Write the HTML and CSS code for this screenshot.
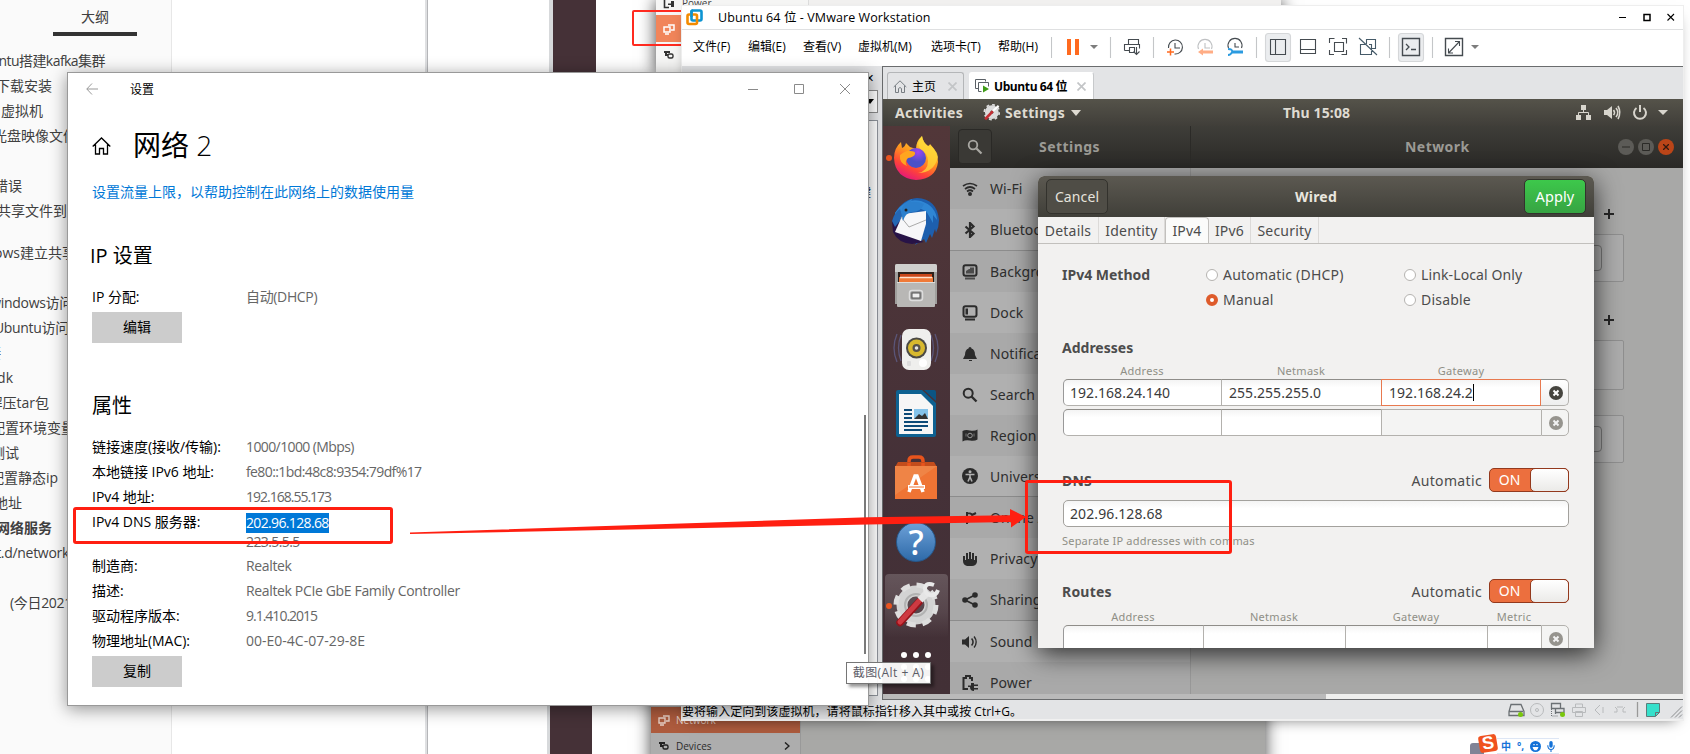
FILE: index.html
```html
<!DOCTYPE html>
<html lang="zh">
<head>
<meta charset="utf-8">
<title>设置</title>
<link rel="stylesheet" href="styles.css">
</head>
<body>
<div class="desktop">

  <aside class="outline">
    <div class="outline-tab">大纲</div>
    <ul class="outline-list">
      <li style="width:105px" class="tighter">Ubuntu搭建kafka集群</li>
      <li style="width:52px">下载安装</li>
      <li style="width:43px">虚拟机</li>
      <li style="width:77px" class="gap25">光盘映像文件</li>
      <li style="width:22px">错误</li>
      <li style="width:67px" class="gap17">共享文件到</li>
      <li style="width:76px" class="gap25">windows建立共享</li>
      <li style="width:73px" class="tight">windows访问</li>
      <li style="width:69px" class="tight">Ubuntu访问</li>
      <li style="width:1px">接</li>
      <li style="width:13px">jdk</li>
      <li style="width:49px">解压tar包</li>
      <li style="width:75px">配置环境变量</li>
      <li style="width:19px">测试</li>
      <li style="width:58px">配置静态ip</li>
      <li style="width:22px">地址</li>
      <li style="width:52px" class="current">网络服务</li>
      <li style="width:69px" class="gap25 tight">init.d/network</li>
      <li style="width:72px" class="tight">(今日2021</li>
    </ul>
  </aside>
  <div class="rule rule-a"></div>
  <div class="strip strip-top"></div>
  <div class="strip strip-bottom"></div>

  <div class="shot shot-top">
    <div class="shot-side">
      <div class="shot-row first"><svg width="12" height="12" viewBox="0 0 12 12"><path d="M6 10.500H1.500V0" stroke="#333" stroke-width="1.600" fill="none"/><path d="M5 6.500h3V4h3v6H8V8H5z" fill="#333"/></svg><span>Power</span></div>
      <div class="shot-row orange"><svg width="12" height="12" viewBox="0 0 12 12"><path d="M5 2h6v5H8M1 4h6v5H1zM2 11h4" stroke="#fff" stroke-width="1.500" fill="none"/></svg></div>
      <div class="shot-row"><svg width="12" height="12" viewBox="0 0 12 12"><path d="M1 3h6M3 3v3h2" stroke="#333" stroke-width="2" fill="none"/><rect x="5" y="5" width="5" height="4" rx="1.500" stroke="#333" stroke-width="1.400" fill="none"/></svg></div>
    </div>
    <div class="shot-main"></div>
  </div>
  <div class="shot-mark"></div>

  <div class="shot shot-bottom">
    <div class="shot-side">
      <div class="shot-row orange"><svg width="12" height="12" viewBox="0 0 12 12"><path d="M5 2h6v5H8M1 4h6v5H1zM2 11h4" stroke="#e6cfc5" stroke-width="1.400" fill="none"/></svg><span>Network</span></div>
      <div class="shot-row"><svg width="12" height="12" viewBox="0 0 12 12"><path d="M1 3h6M3 3v3h2" stroke="#222" stroke-width="2" fill="none"/><rect x="5" y="5" width="5" height="4" rx="1.500" stroke="#222" stroke-width="1.400" fill="none"/></svg><span>Devices</span><svg class="chev" width="6" height="8" viewBox="0 0 6 8"><path d="M1 .5L5 4 1 7.500" stroke="#222" stroke-width="1.500" fill="none"/></svg></div>
    </div>
    <div class="shot-main"></div>
  </div>

  <section class="vmware">
    <header class="vm-title">
      <svg width="17" height="17" viewBox="0 0 17 17" fill="none"><rect x="5.500" y="1.500" width="10" height="10" rx="1.500" stroke="#0d94d2" stroke-width="2.600"/><rect x="1.500" y="5.500" width="9.500" height="9.500" rx="1.500" stroke="#f38b00" stroke-width="2.600"/><path d="M5.500 8V3q0-1.500 1.500-1.500" stroke="#0d94d2" stroke-width="2.600"/></svg>
      <span class="vm-name">Ubuntu 64 位 - VMware Workstation</span>
      <svg class="vm-ctl" width="56" height="10" viewBox="0 0 56 10" fill="none" stroke="#000"><path d="M0 4.500h7"/><rect x="25" y="1.500" width="6" height="6" stroke-width="1.500"/><path d="M48.500 1l6.500 6.500M55 1l-6.500 6.500" stroke-width="1.100"/></svg>
    </header>
    <nav class="vm-menu">
      <span class="m1">文件(F)</span><span class="m1">编辑(E)</span><span class="m1">查看(V)</span><span class="m2">虚拟机(M)</span><span class="m3">选项卡(T)</span><span class="m4">帮助(H)</span>
      <svg class="vm-tools" width="440" height="35" viewBox="1051 30 440 35" fill="none" stroke="#454b50" stroke-width="1.100">
        <path d="M1051.500 37v21M1110.500 37v21M1153.500 37v21M1256.500 37v21M1389.500 37v21M1432.500 37v21" stroke="#c4c6c8"/>
        <path d="M1069 39v16M1077 39v16" stroke="#ff6a1f" stroke-width="4"/>
        <path d="M1090 45h8l-4 4zM1471 45h8l-4 4z" fill="#7d7d7d" stroke="none"/>
        <path d="M1128.500 44.500v-5h10v5M1124.500 50.500v-6h15v4M1124.500 50.500h5M1129.500 47.500h5v5h-5zM1136.500 47v8M1133.500 51.500l3 3 3-3"/>
        <path d="M1168.500 48a7 7 0 1 1 6 6M1175 43v5h5"/><path d="M1167 52h7M1170.500 48.500v7" stroke="#ff6a1f" stroke-width="1.500"/>
        <path d="M1198.500 49a7 7 0 1 1 13 0M1205 43v5h5" stroke="#bfc1c3"/><path d="M1213 52h-11" stroke="#ffad85" stroke-width="3"/><path d="M1203 48.500l-5 3.500 5 3.500z" fill="#ffad85" stroke="none"/>
        <path d="M1228.500 48a7 7 0 1 1 13 0M1235 43v4h4"/><path d="M1232 52h11" stroke="#2b9be0" stroke-width="3"/><path d="M1228 49q5 0 4 3t-4 3" stroke="#2b9be0" stroke-width="1.800"/>
        <rect x="1265.500" y="33.500" width="25" height="28" rx="3" fill="#ebedef" stroke="#d5d7d9"/>
        <path d="M1270.500 39.500h15v15h-15zM1275.500 39v16M1300.500 39.500h15v14h-15zM1300 49.500h15"/>
        <path d="M1334.500 42.500h9v9h-9zM1329.500 43v-4.500h5M1342 38.500h4.500v5M1346.500 50v4.500h-5M1334 54.500h-4.500V50"/>
        <path d="M1366.500 44v-4.500h9v9h-4M1369 44.500h2.500v10h-11v-10h5M1359 38l18 17" stroke="#455a68"/>
        <rect x="1398.500" y="33.500" width="25" height="28" rx="3" fill="#ebedef" stroke="#d5d7d9"/>
        <path d="M1402.500 38.500h17v17h-17z" stroke-width="1.400"/><path d="M1406 44l3 3-3 3M1411 49.500h5" stroke-width="1.300"/>
        <path d="M1445.500 38.500h17v17h-17z" stroke-width="1.400"/><path d="M1455 41.500h4.500V46M1448.500 48.500v4.500h4.500M1459 42l-10 10.500"/>
      </svg>
    </nav>
    <div class="vm-body">
      <div class="vm-lib">
        <div class="lib-head">✕</div>
        <div class="lib-search"><svg width="8" height="5" viewBox="0 0 8 5"><path d="M0 0h8L4 5z"/></svg></div>
        <div class="lib-tree">键</div>
      </div>
      <div class="vm-view">
        <div class="vm-tabs">
          <div class="vm-tab home"><svg width="14" height="13" viewBox="0 0 14 13" fill="none" stroke="#777d82"><path d="M.700 7L7 .800 13.300 7M2.500 5.500v7h3v-4q1.500-2 3 0v4h3v-7"/></svg><span>主页</span><svg width="9" height="9" viewBox="0 0 9 9"><path d="M.500.500l8 8M8.500.500l-8 8" stroke="#c3c5c7" stroke-width="1.700"/></svg></div>
          <div class="vm-tab active"><svg width="15" height="14" viewBox="0 0 15 14" fill="none" stroke="#5a6066"><path d="M3.500 9.500h-3v-9h10v2M6.500 12.500h-3v-9h10v4"/><path d="M8 6.500v7l6-3.500z" fill="#3f9c17" stroke="none"/></svg><span>Ubuntu 64 位</span><svg width="9" height="9" viewBox="0 0 9 9"><path d="M.500.500l8 8M8.500.500l-8 8" stroke="#c3c5c7" stroke-width="1.700"/></svg></div>
        </div>

        <div class="ubuntu">
          <div class="topbar">
            <span class="tb-act">Activities</span>
            <svg class="tb-gear" width="17" height="17" viewBox="0 0 48 48"><circle cx="25" cy="23" r="12" fill="none" stroke="#dcdcdc" stroke-width="15"/><circle cx="25" cy="23" r="21" fill="none" stroke="#dcdcdc" stroke-width="5" stroke-dasharray="8 8.500"/><path d="M6 43L28 20" stroke="#c32f35" stroke-width="7.500"/><path d="M28 20L44 5" stroke="#fff" stroke-width="6"/></svg>
            <span class="tb-app">Settings</span>
            <svg width="10" height="6" viewBox="0 0 10 6"><path d="M0 0h10L5 6z" fill="#dfdbd2"/></svg>
            <span class="tb-clock">Thu 15:08</span>
            <svg class="tb-tray" width="94" height="16" viewBox="0 0 94 16" fill="#d8d5cd"><path d="M5 0h5v5H5zM0 10h5v5H0zM10 10h5v5h-5z"/><path d="M7.500 5v3M2.500 10V7.500h10V10" stroke="#d8d5cd" fill="none"/><path d="M28 5h3l5-4v13l-5-4h-3z"/><path d="M37.500 5q2 2.500 0 5M40 3q3.500 4.500 0 9M42 1q3.500 6.500 0 13" stroke="#d8d5cd" stroke-width="1.600" fill="none"/><path d="M60.500 3a6 6 0 1 0 7 0M64 0v7" stroke="#d8d5cd" stroke-width="2" fill="none"/><path d="M82 5h10l-5 5z"/></svg>
          </div>
          <div class="ub-main">
            <div class="dock">
              <div class="dock-cell run"><svg width="48" height="48" viewBox="0 1 48 48"><defs><linearGradient id="ff" x1=".8" y1="0" x2=".3" y2="1"><stop offset="0" stop-color="#ffe945"/><stop offset=".45" stop-color="#ff9a1e"/><stop offset=".75" stop-color="#ff4438"/><stop offset="1" stop-color="#e3157e"/></linearGradient><radialGradient id="fp" cx=".6" cy=".2"><stop offset="0" stop-color="#a144f5"/><stop offset="1" stop-color="#4a51c8"/></radialGradient></defs><path d="M2 25q0-10 7-16l1 6q3-1 4-5l4 4 6 2q0-8 6-13 1 7 6 10 2-1 2-2 8 8 8 18-2 17-22 18Q3 45 2 25z" fill="url(#ff)"/><path d="M30 3q-6 7-2 13 8 4 8 12 0 10-10 12 16 0 20-16Q44 14 36 13q-5-4-6-10z" fill="#ffdb3a" opacity=".75"/><circle cx="24" cy="25" r="10" fill="url(#fp)"/><path d="M8 22q7-5 10-4 6 0 5 3-1 3-7 4-4 4-1 8Q7 30 8 22z" fill="#ffa51f"/></svg></div>
              <div class="dock-cell"><svg width="50" height="50" viewBox="0 0 50 50"><path d="M4 16Q12 2 26 1q20 1 22 22 0 7-3 13l-1-4-3 9-2-4-4 9-2-4-9 6 6-12z" fill="#1d5fae"/><path d="M4 16Q14 0 30 4q15 5 16 19l-4-5 0 8-4-7q-3-7-12-8-12 0-22 12z" fill="#2f86d4"/><path d="M1 24q2-6 6-9l6 22 20 8-12 2q-14-1-19-12z" fill="#271347"/><path d="M1 24q2-8 8-12l3 8-8 10z" fill="#2467b4"/><path d="M12 17l23-3 0 13-5 17L4 35z" fill="#f7f7f9"/><path d="M10 20l8 10 17-7" stroke="#aaa" stroke-width="1" fill="none"/><path d="M10 15q2-10 11-13l-1 3q6-1 13 2-3 8-12 8-7 1-9 9z" fill="#2b7fcd"/><circle cx="15" cy="13" r="1.500" fill="#222"/></svg></div>
              <div class="dock-cell"><svg width="44" height="46" viewBox="0 0 44 46"><path d="M1 3q0-2 2-2h38q2 0 2 2v38H1z" fill="#a09f9d"/><path d="M1 3q0-2 2-2h38q2 0 2 2v6H1z" fill="#cfcfcd"/><path d="M4 9h36v12H4z" fill="#2e211b"/><path d="M6 11h32v9H6z" fill="#c9471a"/><path d="M5 14h34v6H5z" fill="#f07a38"/><path d="M6 14.500h32" stroke="#ffe3cf" stroke-width="1.500"/><path d="M3 19h38v24q0 1-1 1H4q-1 0-1-1z" fill="#b8b7b5"/><path d="M3 19.500h38" stroke="#dedddb"/><rect x="15.500" y="27.500" width="13" height="10" rx="2.500" fill="#999" stroke="#ddd" stroke-width="1.500"/><rect x="18" y="30" width="8" height="5" fill="#eee" stroke="#555"/></svg></div>
              <div class="dock-cell"><svg width="48" height="48" viewBox="0 0 48 48"><path d="M5 8q-6 14 0 28M9 9q-5 13 0 26M43 8q6 14 0 28M39 9q5 13 0 26" stroke="#5a5578" stroke-width="1.300" fill="none"/><rect x="10" y="3" width="29" height="41" rx="7" fill="#efefed"/><circle cx="24.500" cy="22" r="10.500" fill="#4b4a45"/><circle cx="24.500" cy="22" r="8.500" fill="#d8b92e"/><circle cx="24.500" cy="22" r="4" fill="#57524a"/><circle cx="24.500" cy="22" r="1.800" fill="#e8e8e8"/><rect x="15" y="35" width="4" height="5" rx="1" fill="#ddd"/><circle cx="31" cy="37" r="4" fill="#fff"/></svg></div>
              <div class="dock-cell"><svg width="42" height="48" viewBox="0 0 42 48"><path d="M1 2q0-2 2-2h24l14 13v32q0 2-2 2H3q-2 0-2-2z" fill="#0e6191"/><path d="M4 4h22l12 12v28H4z" fill="#f6f6f6"/><path d="M29 0h10q2 0 2 2v9z" fill="#0b5583"/><path d="M9 20h8M9 24h8M9 28h8M9 32h24M9 36h24M9 40h18" stroke="#0e4b78" stroke-width="2"/><rect x="19" y="19" width="14" height="10" fill="#84c3ea"/><path d="M19 29l5-5 3 2 3-3 3 6z" fill="#333"/></svg></div>
              <div class="dock-cell"><svg width="44" height="46" viewBox="0 0 44 46"><path d="M15 12V6q0-4 4-4h6q4 0 4 4v6" stroke="#e8541c" stroke-width="3.500" fill="none"/><path d="M4 7h36l3 5H1z" fill="#c34d1c"/><path d="M15 12V8M29 12V8" stroke="#e8541c" stroke-width="3.500"/><path d="M1 11h42v33H1z" fill="#ef7434"/><path d="M1 11h42L1 40z" fill="#f08b4e" opacity=".7"/><path d="M15 37l6-16h2l6 16" stroke="#fff" stroke-width="3.500" fill="none"/><path d="M14 32h17" stroke="#fff" stroke-width="4"/><path d="M15 32h15" stroke="#ef7434" stroke-width="1"/></svg></div>
              <div class="dock-cell"><div class="help">?</div></div>
              <div class="dock-cell run selected"><svg width="48" height="48" viewBox="0 1 48 48"><circle cx="24" cy="24" r="14" fill="none" stroke="#d3d3d3" stroke-width="11"/><circle cx="24" cy="24" r="20" fill="none" stroke="#dedede" stroke-width="5" stroke-dasharray="9 6.700"/><circle cx="24" cy="24" r="11" fill="none" stroke="#b2b2b2" stroke-width="2"/><path d="M8 41.500L27 21" stroke="#97131b" stroke-width="7.500" stroke-linecap="round"/><path d="M8 41L27 20" stroke="#ce3a42" stroke-width="5" stroke-linecap="round"/><path d="M28 19l8-8" stroke="#e5e5e5" stroke-width="7"/><path d="M42 4q-8-3-9 3 0 6 5 7 6 1 8-5" stroke="#e9e9e9" stroke-width="4" fill="none"/></svg></div>
              <svg class="dock-grid" width="30" height="30" viewBox="0 0 30 30" fill="#fff"><circle cx="3" cy="3" r="3"/><circle cx="15" cy="3" r="3"/><circle cx="27" cy="3" r="3"/><circle cx="3" cy="15" r="3"/><circle cx="15" cy="15" r="3"/><circle cx="27" cy="15" r="3"/><circle cx="3" cy="27" r="3"/><circle cx="15" cy="27" r="3"/><circle cx="27" cy="27" r="3"/></svg>
            </div>
            <div class="gset">
              <div class="gset-head">
                <div class="gh-left"><div class="gh-search"><svg width="16" height="16" viewBox="0 0 16 16"><circle cx="6" cy="6" r="4.300" fill="none" stroke="#a9a8a3" stroke-width="1.800"/><path d="M9.500 9.500l5 5" stroke="#a9a8a3" stroke-width="2.200"/></svg></div><span>Settings</span></div>
                <div class="gh-right"><span>Network</span><div class="gh-ctl"><i><svg width="8" height="8"><path d="M0 4h8" stroke="#2b2a27"/></svg></i><i><svg width="8" height="8"><path d="M.5.5h7v7h-7z" fill="none" stroke="#2b2a27"/></svg></i><i class="x"><svg width="6" height="6"><path d="M0 0l6 6M6 0L0 6" stroke="#33190f" stroke-width="1.300"/></svg></i></div></div>
              </div>
              <div class="gset-body">
                <ul class="gset-list">
                  <li><svg viewBox="0 0 16 16"><path d="M1 5q7-5 14 0M3 8q5-4 10 0M5 10.500q3-2.500 6 0" stroke="#2b2b2b" stroke-width="1.700" fill="none"/><circle cx="8" cy="13" r="2"/></svg>Wi-Fi</li>
                  <li class="alt end"><svg viewBox="0 0 16 16"><path d="M3.500 4.500l8 7L8 15V1l3.500 3.500-8 7" stroke="#2b2b2b" stroke-width="2.200" fill="none"/></svg>Bluetooth</li>
                  <li><svg viewBox="0 0 16 16"><rect x="1.500" y="1.200" width="13" height="10.500" rx="2" stroke="#2b2b2b" stroke-width="2" fill="none"/><path d="M4 9.500V7l3-2h1V3.500h4v6zM3 13.500h10v2H3z" opacity=".75"/></svg>Background</li>
                  <li class="alt"><svg viewBox="0 0 16 16"><rect x="1.500" y="1.200" width="13" height="10.500" rx="2" stroke="#2b2b2b" stroke-width="2" fill="none"/><path d="M3.500 3.500H6v6H3.500zM3 13.500h10v2H3z"/></svg>Dock</li>
                  <li><svg viewBox="0 0 16 16"><path d="M8 1q1.500 0 1.500 1.500Q13 3.500 13 9l2 4H1l2-4q0-5.500 3.500-6.500Q6.500 1 8 1zM7 14h3v1H7z"/></svg>Notifications</li>
                  <li class="alt"><svg viewBox="0 0 16 16"><circle cx="6.200" cy="6.200" r="4.500" stroke="#2b2b2b" stroke-width="2" fill="none"/><path d="M9.500 9.500l5 5" stroke="#2b2b2b" stroke-width="2.400"/></svg>Search</li>
                  <li><svg viewBox="0 0 16 16"><path d="M.500 3q3-1.500 7.500-.500t7.500-1v10q-3 2-7.500 1t-7.500 1z"/><circle cx="8" cy="7.500" r="2.300" fill="none" stroke="#999"/><path d="M4 5.500v3M12 5.500v3" stroke="#777"/></svg>Region &amp; Language</li>
                  <li class="alt end"><svg viewBox="0 0 16 16"><circle cx="8" cy="8" r="8"/><circle cx="8" cy="3.700" r="1.500" fill="#b0b0b0"/><path d="M3.500 6.500h9M8 6v4M8 9l-2 4.500M8 9l2 4.500" stroke="#b0b0b0" stroke-width="1.600"/></svg>Universal Access</li>
                  <li><svg viewBox="0 0 16 16"><path d="M5 2v12M5 3q7 0 5 5-1 3-5 4M10 5l4-2" stroke="#2b2b2b" stroke-width="2" fill="none"/></svg>Online Accounts</li>
                  <li class="alt"><svg viewBox="0 0 16 16"><path d="M1 5h2v4h1V2h2v6h1V1h2v7h1V2h2v7h1V5h2v6q-1 4-5 4H5q-4-1-4-5z"/></svg>Privacy</li>
                  <li class="end"><svg viewBox="0 0 16 16"><circle cx="3" cy="8" r="2.800"/><circle cx="13" cy="3" r="2.800"/><circle cx="13" cy="13" r="2.800"/><path d="M3 8l10-5M3 8l10 5" stroke="#2b2b2b" stroke-width="1.800"/></svg>Sharing</li>
                  <li class="alt"><svg viewBox="0 0 16 16"><path d="M0 5.500h3L7 2v12l-4-3.500H0zM9 5q2.500 3 0 6l1.200 1q3.300-4 0-8zM11.500 3q4 5 0 10l1.200 1q4.300-6 0-12z"/></svg>Sound</li>
                  <li><svg viewBox="0 0 16 16"><path d="M6 14H1.500V3H4V1h4v2h2v3" stroke="#2b2b2b" stroke-width="2" fill="none"/><path d="M6 10.500h3V8h3v1.500h4V11h-4v2h4v1.500h-4V16q-4 0-4-4H6z"/></svg>Power</li>
                </ul>
                <div class="gset-pane">
                  <div class="plus p1"><svg width="10" height="10"><path d="M0 5h10M5 0v10" stroke="#262626" stroke-width="2"/></svg></div>
                  <div class="card c1"><div class="cog"></div></div>
                  <div class="plus p2"><svg width="10" height="10"><path d="M0 5h10M5 0v10" stroke="#262626" stroke-width="2"/></svg></div>
                  <div class="card c2"></div>
                  <div class="card c3"><div class="cog"></div></div>
                </div>
              </div>
            </div>
          </div>
        </div>
        <div class="hscroll"><div></div></div>
      </div>
    </div>
    <footer class="vm-status">
      <span>要将输入定向到该虚拟机，请将鼠标指针移入其中或按 Ctrl+G。</span>
      <svg width="178" height="20" viewBox="1506 701 178 20" fill="none" stroke="#6b7074">
        <path d="M1512 705.500h10l3 7v4h-15v-4zM1510 712.500h14" stroke-width="1.300"/><path d="M1552.500 704.500h9v5h-9zM1556.500 709v6M1556 713.500h9v-4h-9" stroke-width="1.300"/><path d="M1552.500 710v7h6" stroke-dasharray="1 1"/>
        <g stroke="#b8babc"><circle cx="1538" cy="711" r="6.500"/><circle cx="1538" cy="711" r="1.500"/><path d="M1576.500 708v-3h7v3M1573.500 708.500h13v5h-13zM1576.500 712.500h7v5h-7zM1601 706l-5 5 5 5M1604 708v6M1615 713h3v-3l-2-2M1627 713h-3v-3l2-2M1618 708h6"/></g>
        <circle cx="1521.500" cy="715.500" r="2.500" fill="#7ac70c" stroke="none"/><circle cx="1563.500" cy="715.500" r="2.500" fill="#7ac70c" stroke="none"/>
        <path d="M1638.500 703v15" stroke="#999" stroke-width="1.300"/>
        <path d="M1647.500 704.500h13v9l-4 4h-9z" fill="#36e0cb" stroke="#5c7c7a"/><path d="M1656.500 717v-3.500h4"/>
        <path d="M1672 718.500l11-11M1676 718.500l7-7M1680 718.500l3-3" stroke="#8b8d8f"/>
      </svg>
    </footer>
  </section>

  <section class="dialog">
    <header class="dlg-head"><button class="dlg-btn">Cancel</button><b>Wired</b><button class="dlg-btn apply">Apply</button></header>
    <nav class="dlg-tabs"><span class="t1">Details</span><span class="t2">Identity</span><span class="t3 on">IPv4</span><span class="t4">IPv6</span><span class="t5">Security</span></nav>
    <div class="dlg-body">
      <div class="method">
        <b>IPv4 Method</b><label><i></i>Automatic (DHCP)</label><label><i></i>Link-Local Only</label>
        <span></span><label><i class="sel"></i>Manual</label><label><i></i>Disable</label>
      </div>
      <b class="h-addr">Addresses</b>
      <div class="cols addr caps"><span>Address</span><span>Netmask</span><span>Gateway</span></div>
      <div class="cols addr row"><div>192.168.24.140</div><div>255.255.255.0</div><div class="focus">192.168.24.2<i class="caret"></i></div><div class="del"><svg width="14" height="14"><circle cx="7" cy="7" r="7" fill="#46453f"/><path d="M4.500 4.500l5 5M9.500 4.500l-5 5" stroke="#fff" stroke-width="2"/></svg></div></div>
      <div class="cols addr row second"><div></div><div></div><div class="off"></div><div class="del off"><svg width="14" height="14"><circle cx="7" cy="7" r="7" fill="#96948e"/><path d="M4.500 4.500l5 5M9.500 4.500l-5 5" stroke="#f2f2f2" stroke-width="2"/></svg></div></div>
      <div class="sec s-dns"><b>DNS</b><span>Automatic</span><div class="switch"><em>ON</em><i></i></div></div>
      <div class="entry">202.96.128.68</div>
      <div class="hint">Separate IP addresses with commas</div>
      <div class="sec s-routes"><b>Routes</b><span>Automatic</span><div class="switch"><em>ON</em><i></i></div></div>
      <div class="cols route caps"><span>Address</span><span>Netmask</span><span>Gateway</span><span>Metric</span></div>
      <div class="cols route row"><div></div><div></div><div></div><div></div><div class="del off"><svg width="14" height="14"><circle cx="7" cy="7" r="7" fill="#96948e"/><path d="M4.500 4.500l5 5M9.500 4.500l-5 5" stroke="#f2f2f2" stroke-width="2"/></svg></div></div>
    </div>
  </section>

  <section class="win">
    <header class="win-title">
      <svg width="12" height="12" viewBox="0 0 12 12"><path d="M12 6H.800M6 .500L.800 6 6 11.500" fill="none" stroke="#999"/></svg>
      <span>设置</span>
      <svg class="win-ctl" width="104" height="12" viewBox="0 0 104 12" fill="none" stroke="#8a8a8a"><path d="M1 6.500h10M47.500 1.500h9v9h-9zM93 1l10 10M103 1L93 11"/></svg>
    </header>
    <div class="win-body">
      <div class="win-h1"><svg width="19" height="18" viewBox="0 0 19 18" fill="none" stroke="#000" stroke-width="1.300"><path d="M.700 9.500L9.500 1l8.800 8.500M3.500 7.500v9.500h4v-5.500h4V17h4V7.500"/></svg><h1>网络 <small>2</small></h1></div>
      <a class="win-link">设置流量上限，以帮助控制在此网络上的数据使用量</a>
      <h2 class="h-ip">IP 设置</h2>
      <dl class="props p-ip"><dt>IP 分配:</dt><dd>自动(DHCP)</dd></dl>
      <div class="wbtn">编辑</div>
      <h2 class="h-prop">属性</h2>
      <dl class="props">
        <dt>链接速度(接收/传输):</dt><dd class="num">1000/1000 (Mbps)</dd>
        <dt>本地链接 IPv6 地址:</dt><dd class="num">fe80::1bd:48c8:9354:79df%17</dd>
        <dt>IPv4 地址:</dt><dd class="ip">192.168.55.173</dd>
        <dt class="tall">IPv4 DNS 服务器:</dt><dd class="tall"><mark>202.96.128.68</mark><span>223.5.5.5</span></dd>
        <dt>制造商:</dt><dd>Realtek</dd>
        <dt>描述:</dt><dd>Realtek PCIe GbE Family Controller</dd>
        <dt>驱动程序版本:</dt><dd class="ip">9.1.410.2015</dd>
        <dt>物理地址(MAC):</dt><dd class="mac">00-E0-4C-07-29-8E</dd>
      </dl>
      <div class="wbtn copy">复制</div>
    </div>
    <div class="win-scroll"></div>
  </section>

  <div class="tooltip">截图(Alt + A)</div>

  <div class="ime"><div class="ime-logo">S</div><div class="ime-bar"><span>中</span><span>°,</span><svg width="11" height="11" viewBox="0 0 13 13"><circle cx="6.500" cy="6.500" r="6.500" fill="#1472d8"/><path d="M3 7h7q-1 4-3.500 4T3 7zM4 3.500h1.500V5H4zM7.500 3.500H9V5H7.500z" fill="#fff"/></svg><svg width="8" height="11" viewBox="0 0 9 13"><rect x="2.500" y="0" width="4" height="8" rx="2" fill="#1472d8"/><path d="M.700 5q0 5 3.800 5t3.800-5M4.500 10v3" stroke="#1472d8" stroke-width="1.300" fill="none"/></svg></div></div>

  <svg class="marks" width="1690" height="754" viewBox="0 0 1690 754">
    <g fill="none" stroke="#ff1f11" stroke-width="3"><rect x="74.500" y="508.500" width="317" height="34" rx="1.500"/><rect x="1026.500" y="481.500" width="204" height="71" rx="1.500"/></g>
    <path d="M410 532.500L868 517.300 1010 515.300V509l16 8-15 10.500V522L868 524.500 410 534z" fill="#ff1f11"/>
  </svg>
</div>
</body>
</html>
```

FILE: styles.css
```css
* { box-sizing: border-box; }
body, ul, dl, dd, h1, h2 { margin: 0; padding: 0; }
ul { list-style: none; }
svg { display: block; flex: none; }
i, em { font-style: normal; }
body { font-family: "Open Sans", "Noto Sans CJK SC", sans-serif; overflow: hidden; }
.desktop { position: relative; width: 1690px; height: 754px; overflow: hidden; background: #fff; }

/* document outline behind the windows */
.outline { width: 172px; height: 754px; background: #fafafa; border-right: 1px solid #e7e7e7; color: #404040; font-size: 14px; overflow: hidden; }
.outline-tab { width: 84px; height: 36px; margin-left: 53px; border-bottom: 4px solid #333; text-align: center; line-height: 34px; }
.outline-list { padding-top: 12px; }
.outline-list li { display: flex; justify-content: flex-end; height: 25px; line-height: 25px; white-space: nowrap; }
.outline-list .gap25 { margin-bottom: 25px; }
.outline-list .gap17 { margin-bottom: 17px; }
.outline-list .current { font-weight: 700; }
.outline-list .tight { letter-spacing: -.3px; }
.outline-list .tighter { letter-spacing: -.55px; }
.rule { position: absolute; top: 0; left: 425px; width: 3px; height: 754px; background: #dfe0e2; border-right: 1px solid #b5b6b9; }
.strip { position: absolute; background: #453137; border-left: 4px solid #d7d9db; }
.strip-top { left: 549px; top: 0; width: 47px; height: 73px; }
.strip-bottom { left: 547px; top: 705px; width: 45px; height: 49px; border-left-width: 3px; }

/* pasted screenshots inside the document */
.shot { position: absolute; display: flex; font-size: 10px; }
.shot-top { left: 656px; top: 0; width: 625px; height: 75px; background: #f2f1f0; box-shadow: 0 0 16px rgba(0,0,0,.75); }
.shot-top .shot-side { width: 153px; border-right: 1px solid #ddd; background: #f6f6f5; }
.shot-row { display: flex; align-items: center; gap: 7px; height: 26px; padding-left: 7px; color: #444; }
.shot-top .first { height: 15px; padding-bottom: 10px; }
.shot-top .orange { background: #f1855a; height: 27px; }
.shot-bottom { left: 651px; top: 690px; width: 614px; height: 80px; background: #a8a8a6; box-shadow: 0 0 16px rgba(0,0,0,.75); }
.shot-bottom .shot-side { width: 150px; padding-top: 17px; background: #adadad; border-right: 1px solid #999; }
.shot-bottom .shot-row { color: #2b2b2b; gap: 6px; }
.shot-bottom .orange { background: #ad5b3d; color: #e6cfc5; }
.shot .chev { margin-left: auto; margin-right: 10px; }
.shot-mark { position: absolute; left: 632px; top: 10px; width: 60px; height: 36px; border: 2px solid #ff2a1f; border-radius: 2px; }

/* VMware window */
.vmware { position: absolute; left: 681px; top: 5px; width: 1003px; height: 716px; background: #fff; border: 1px solid #eee; box-shadow: 0 6px 14px -8px rgba(0,0,0,.6); display: flex; flex-direction: column; font-size: 12px; color: #000; }
.vm-title { display: flex; align-items: center; height: 24px; padding-left: 4px; border-bottom: 1px solid #dfe0e1; }
.vm-name { margin-left: 15px; margin-top: -2px; font-size: 12.500px; letter-spacing: .09px; white-space: pre; }
.vm-ctl { margin-left: auto; margin-right: 8px; }
.vm-menu { display: flex; height: 36px; padding-left: 11px; line-height: 33px; white-space: nowrap; }
.vm-menu .m1 { width: 55px; }
.vm-menu .m2 { width: 73px; }
.vm-menu .m3 { width: 67px; }
.vm-menu .m4 { width: 53px; }
.vm-body { display: flex; height: 634px; background: #e3e4e6; }
.vm-lib { width: 200px; padding: 0 4px 4px; display: flex; flex-direction: column; align-items: stretch; }
.lib-head { height: 24px; padding-right: 4px; text-align: right; font-size: 11px; line-height: 24px; }
.lib-search { height: 23px; border: 1px solid #8b8b8b; background: #fff; display: flex; align-items: center; justify-content: flex-end; padding-right: 3px; }
.lib-tree { flex: 1; margin-top: 7px; border: 1px solid #8f949b; background: #fff; text-align: right; padding: 62px 6px 0 0; color: #234; }
.vm-view { flex: 1; border: 1px solid #6a6c6e; border-right: 0; display: flex; flex-direction: column; overflow: hidden; }
.vm-tabs { display: flex; gap: 5px; height: 32px; padding: 5px 0 0 4px; }
.vm-tab { display: flex; align-items: center; height: 27px; border: 1px solid #b4b6b8; border-bottom: 0; border-radius: 3px 3px 0 0; font-size: 12px; white-space: nowrap; }
.vm-tab.home { width: 77px; padding-left: 5px; gap: 5px; }
.vm-tab.home span { width: 31px; }
.vm-tab.active { width: 125px; padding-left: 5px; gap: 4px; background: #fff; font-weight: 700; border-color: #fff #c7c9cb #fff #fff; }
.vm-tab.active span { width: 79px; letter-spacing: -.4px; }
.ubuntu { height: 595px; overflow: hidden; font-family: "Noto Sans", sans-serif; }
.hscroll { height: 5px; background: #efefee; }
.hscroll div { width: 443px; height: 5px; background: #bababa; }
.vm-status { display: flex; justify-content: space-between; height: 20px; background: #e3e4e6; border-bottom: 1px solid #f0f0f0; line-height: 23px; font-size: 12px; letter-spacing: .05px; white-space: nowrap; }

/* Ubuntu desktop */
.topbar { position: relative; display: flex; align-items: center; height: 27px; padding-left: 12px; background: linear-gradient(#55534a, #403e39); color: #dfdbd2; font-size: 14px; font-weight: 700; }
.tb-act { width: 88px; letter-spacing: .3px; }
.tb-app { margin: 0 6px 0 5px; letter-spacing: .35px; }
.tb-clock { position: absolute; left: 400px; letter-spacing: .15px; }
.tb-tray { margin-left: auto; margin-right: 13px; }
.ub-main { display: flex; height: 568px; }
.dock { width: 67px; padding-right: 1px; background: linear-gradient(#523739, #453138 60%, #423036); display: flex; flex-direction: column; align-items: center; }
.dock-cell { position: relative; display: flex; align-items: center; justify-content: center; width: 63px; height: 64px; flex: none; }
.dock-cell.run::before { content: ""; position: absolute; left: 1px; top: 29px; width: 6px; height: 6px; border-radius: 50%; background: #e95420; }
.dock-cell.selected { border-radius: 4px; background: linear-gradient(rgba(255,255,255,.18), rgba(255,255,255,.1) 60%, transparent); }
.help { width: 40px; height: 40px; border-radius: 50%; background: linear-gradient(#6ca0d8, #2e6aa8); border: 1px solid #26588c; color: #fff; font: 500 34px/38px "Noto Sans", sans-serif; text-align: center; }
.dock-grid { margin-top: 14px; }
.gset { flex: 1; display: flex; flex-direction: column; }
.gset-head { display: flex; height: 42px; background: linear-gradient(#3f3e39, #2a2926); color: #9b9a95; font-size: 14px; font-weight: 700; }
.gh-left { display: flex; align-items: center; width: 241px; padding: 0 0 1px 8px; border-right: 1px solid #2b2a27; letter-spacing: .45px; }
.gh-search { display: flex; align-items: center; justify-content: center; width: 34px; height: 35px; border: 1px solid #2a2926; border-radius: 4px; background: #3a3935; margin-right: 47px; }
.gh-right { flex: 1; display: flex; align-items: center; justify-content: space-between; padding: 0 9px 1px 214px; letter-spacing: .45px; }
.gh-ctl { display: flex; gap: 4px; }
.gh-ctl i { width: 16px; height: 16px; border-radius: 50%; background: #5c5b57; display: flex; align-items: center; justify-content: center; }
.gh-ctl .x { background: #bb4518; }
.gset-body { display: flex; flex: 1; background: #a8a8a7; overflow: hidden; }
.gset-list { width: 241px; border-right: 1px solid #989898; color: #2e2e2e; font-size: 14px; }
.gset-list li { display: flex; align-items: center; gap: 12px; height: 41px; padding-left: 12px; background: #a9a9a9; letter-spacing: .1px; white-space: nowrap; }
.gset-list svg { width: 16px; height: 16px; fill: #2b2b2b; }
.gset-list .alt { background: #b0b0b0; }
.gset-list .end { border-bottom: 1px solid #8c8c8c; }
.gset-list .end:nth-child(2) { height: 42px; }
.gset-list .end:nth-child(11) { height: 42px; }
.gset-pane { flex: 1; padding-right: 59px; }
.plus { display: flex; justify-content: flex-end; padding-right: 10px; }
.p1 { height: 66px; padding-top: 41px; }
.p2 { height: 58px; padding-top: 33px; }
.card { border: 1px solid #8f8f8f; background: #acacac; margin-left: 50px; border-radius: 2px; display: flex; justify-content: flex-end; padding: 10px 21px; }
.c1 { height: 48px; }
.c2 { height: 50px; }
.c3 { height: 48px; margin-top: 25px; }
.cog { width: 40px; height: 26px; border: 1px solid #777; border-radius: 4px; }

/* Wired dialog */
.dialog { position: absolute; left: 1038px; top: 176px; width: 556px; height: 472px; background: #f2f1f0; border-radius: 6px 6px 0 0; box-shadow: 0 6px 26px rgba(0,0,0,.75); overflow: hidden; color: #4c4c4c; font: 14px "Noto Sans", sans-serif; clip-path: inset(-60px -89px -46px -88px); }
.dlg-head { display: flex; align-items: center; justify-content: space-between; height: 41px; padding: 0 8px; background: linear-gradient(#5c5951, #403f39); color: #f0eee9; }
.dlg-btn { width: 62px; height: 35px; padding: 0; border: 1px solid #33322d; border-radius: 5px; background: #4f4d46; color: #e6e3dc; font: 14px "Noto Sans", sans-serif; letter-spacing: .1px; }
.dlg-head b { color: #e9e6df; letter-spacing: .2px; }
.dlg-head .apply { padding-bottom: 2px; background: linear-gradient(#3dc84b, #37a443); color: #fff; font-size: 14.500px; }
.dlg-tabs { display: flex; height: 27px; border-bottom: 1px solid #c2c0bd; line-height: 27px; letter-spacing: .2px; white-space: nowrap; }
.dlg-tabs span { text-align: center; border-right: 1px solid #dcdad8; }
.t1 { width: 61px; }
.t2 { width: 66px; }
.t3 { width: 44px; }
.t4 { width: 42px; }
.t5 { width: 68px; }
.dlg-tabs .on { background: #fbfbfa; border: 1px solid #c2c0bd; border-bottom: 0; border-radius: 4px 4px 0 0; line-height: 26px; }
.dlg-body { padding: 19px 24px 0; display: flex; flex-direction: column; }
.method { display: grid; grid-template-columns: 144px 198px 1fr; grid-auto-rows: 25px; line-height: 24px; }
.method label { display: flex; align-items: center; gap: 5px; height: 23px; letter-spacing: .2px; white-space: nowrap; }
.method label:nth-child(3) { letter-spacing: .12px; }
.method i { width: 12px; height: 12px; border-radius: 50%; border: 1px solid #b5b3b0; background: #fff; }
.method .sel { border: 4px solid #de5b2b; }
.h-addr { height: 24px; margin-top: 23px; line-height: 24px; }
.cols { display: grid; width: 506px; margin-left: 1px; }
.addr { grid-template-columns: 158px 160px 160px 28px; }
.route { grid-template-columns: 140px 142px 142px 54px 28px; }
.caps { height: 16px; margin-top: 3px; line-height: 16px; font-size: 11px; text-align: center; color: #8f8f86; letter-spacing: .3px; }
.route.caps { margin-top: 6px; }
.row > div { height: 28px; border: 1px solid #b3b1ad; border-right-width: 0; border-top-color: #8f8d89; background: linear-gradient(#f4f4f4, #fff 30%); padding-left: 7px; line-height: 25px; color: #3b3b3b; letter-spacing: .05px; }
.row > div:first-child { padding-left: 6px; border-radius: 5px 0 0 5px; border-left-color: #999; }
.row > .focus { border-color: #e8794f; border-right-width: 1px; }
.row > .off { background: #f4f4f3; border-top-color: #b3b1ad; }
.row > .del { display: flex; align-items: center; padding-left: 7px; border-right-width: 1px; border-radius: 0 5px 5px 0; }
.row > .focus + .del { border-left: 0; padding-left: 8px; background: linear-gradient(#fff, #eee); }
.addr.row > div { height: 27px; }
.second { margin-top: 3px; }
.caret { display: inline-block; width: 1px; height: 17px; background: #000; vertical-align: -3px; }
.sec { display: flex; align-items: center; height: 24px; width: 507px; letter-spacing: .35px; }
.sec b { flex: 1; letter-spacing: .2px; }
.s-dns { margin-top: 32px; }
.s-routes { margin-top: 30px; }
.switch { width: 80px; height: 24px; margin-left: 7px; border: 1px solid #93391d; border-radius: 5px; background: #ec6f3e; display: flex; justify-content: space-between; line-height: 22px; color: #fff; }
.switch em { width: 39px; text-align: center; font-size: 14px; letter-spacing: 0; }
.switch i { width: 39px; height: 24px; margin: -1px -1px 0 0; border: 1px solid #93391d; border-radius: 5px; background: linear-gradient(#fff, #ebeae8); }
.entry { width: 506px; height: 27px; margin: 8px 0 0 1px; border: 1px solid #a3a19d; border-radius: 5px; background: linear-gradient(#f4f4f4, #fff 30%); padding-left: 6px; line-height: 25px; color: #3b3b3b; letter-spacing: .1px; }
.hint { height: 16px; margin-top: 6px; font-size: 11px; line-height: 16px; color: #8f8f86; letter-spacing: .2px; }

/* Windows settings window */
.win { position: absolute; left: 67px; top: 72px; width: 802px; height: 634px; background: #fff; border: 1px solid #999; box-shadow: 0 3px 16px rgba(0,0,0,.42); color: #000; font-size: 14px; }
.win-title { display: flex; align-items: center; height: 32px; padding: 0 17px 0 18px; font-size: 12px; }
.win-title span { margin-left: 32px; }
.win-ctl { margin-left: auto; }
.win-body { padding: 14px 0 0 24px; }
.win-h1 { display: flex; align-items: center; height: 54px; }
.win-h1 h1 { margin-left: 22px; font-size: 28px; font-weight: 400; line-height: 52px; height: 54px; }
.win-h1 small { font-size: 28px; font-weight: 300; }
.win-link { display: block; height: 24px; margin-top: 7px; line-height: 24px; color: #0078d7; white-space: nowrap; }
h2 { font-size: 20px; font-weight: 400; line-height: 30px; height: 30px; }
.h-ip { margin-top: 37px; margin-left: -2px; }
.props { display: grid; grid-template-columns: 154px 1fr; grid-auto-rows: min-content; line-height: 21px; white-space: nowrap; }
.props dt, .props dd { height: 25px; letter-spacing: -.35px; }
.props dt { letter-spacing: -.02px; }
.props .num { letter-spacing: -.6px; }
.props .ip { letter-spacing: -1px; }
.props .mac { letter-spacing: 0; }
.props dd { color: #666; }
.props .tall { height: 44px; }
.p-ip { margin-top: 14px; line-height: 23px; }
.props mark { display: table; height: 20px; margin-top: 2px; line-height: 20px; background: #0078d7; color: #fff; letter-spacing: -.65px; }
.props span { display: block; line-height: 17px; letter-spacing: -.6px; }
.wbtn { width: 90px; height: 31px; margin-top: 2px; background: #ccc; text-align: center; line-height: 30px; }
.wbtn.copy { margin-top: 1px; }
.h-prop { margin-top: 48px; margin-bottom: 15px; }
.win-scroll { position: absolute; right: 2px; top: 342px; width: 2px; height: 239px; background: #7a7a7a; }

.tooltip { position: absolute; left: 846px; top: 662px; width: 85px; height: 22px; border: 1px solid #767676; background: rgba(255,255,255,.94); box-shadow: 3px 3px 3px rgba(0,0,0,.4); color: #5b5b66; font-size: 12px; line-height: 20px; letter-spacing: .45px; text-align: center; white-space: nowrap; }

/* input method bar */
.ime { position: absolute; left: 1470px; top: 735px; width: 89px; height: 20px; display: flex; }
.ime::before { content: ""; position: absolute; left: 0; top: 8px; width: 14px; height: 14px; background: #808396; border-radius: 3px 0 0 0; }
.ime-logo { position: relative; width: 18px; height: 17px; margin-left: 9px; border-radius: 3px; background: #f0521f; color: #fff; font: 700 18px/17px "Liberation Sans", sans-serif; text-align: center; transform: rotate(-9deg); }
.ime-bar { flex: 1; display: flex; align-items: center; justify-content: space-between; height: 16px; margin-top: 3px; padding: 0 4px 0 4px; border-top: 1px solid #dde6f5; border-bottom: 1px solid #dde6f5; color: #1472d8; font-size: 10px; line-height: 14px; font-weight: 700; }
.marks { position: absolute; left: 0; top: 0; }
```
